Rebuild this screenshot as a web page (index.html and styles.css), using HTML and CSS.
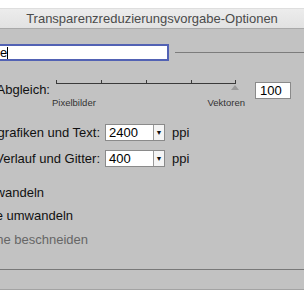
FILE: index.html
```
<!DOCTYPE html>
<html lang="de">
<head>
<meta charset="utf-8">
<title>Transparenzreduzierungsvorgabe-Optionen</title>
<link rel="stylesheet" href="styles.css">
</head>
<body>
<div class="dialog">
  <div class="titlebar">Transparenzreduzierungsvorgabe-Optionen</div>
  <div class="content">
    <div class="name-row">
      <div class="field"><span class="val">e</span><span class="caret"></span></div>
      <div class="rule"></div>
    </div>
    <div class="slider-row">
      <div class="lbl lbl-abgleich"><span>Raster-/Vektor-Abgleich:</span></div>
      <div class="slider">
        <div class="track">
          <div class="seg"></div><div class="seg"></div><div class="seg"></div><div class="seg last"></div>
        </div>
        <div class="thumb-row"><div class="thumb"></div></div>
        <div class="ends"><span>Pixelbilder</span><span>Vektoren</span></div>
      </div>
      <div class="numbox">100</div>
    </div>
    <div class="res-row first">
      <div class="lbl lbl-res"><span>Auflösung für Strichgrafiken und Text:</span></div>
      <div class="select"><span class="sel-val">2400</span><span class="sel-btn">&#9660;</span></div>
      <span class="unit">ppi</span>
    </div>
    <div class="res-row second">
      <div class="lbl lbl-res"><span>Auflösung für Verlauf und Gitter:</span></div>
      <div class="select"><span class="sel-val">400</span><span class="sel-btn">&#9660;</span></div>
      <span class="unit">ppi</span>
    </div>
    <div class="check c1"><span>Gesamten Text in Pfade umwandeln</span></div>
    <div class="check c2"><span>Alle Konturen in Pfade umwandeln</span></div>
    <div class="check c3 disabled"><span>Komplexe Bereiche beschneiden</span></div>
  </div>
  <div class="footer"></div>
</div>
</body>
</html>
```
FILE: styles.css
```
html, body {
  margin: 0;
  padding: 0;
  background: #ffffff;
}
body {
  font-family: "Liberation Sans", Arial, Helvetica, sans-serif;
  font-size: 13px;
  color: #111;
}
.dialog {
  width: 304px;
  height: 304px;
  overflow: hidden;
  padding-top: 8px;
  box-sizing: border-box;
}
.titlebar {
  height: 21px;
  line-height: 20px;
  box-sizing: border-box;
  border-top: 1px solid #dedede;
  border-bottom: 1px solid #a9a9a9;
  background: linear-gradient(#ececec, #e2e2e2);
  text-align: center;
  color: #4b4b4b;
  font-size: 13px;
  white-space: nowrap;
}
.content {
  height: 241px;
  box-sizing: border-box;
  background: #c2c2c2;
  border-bottom: 1px solid #787878;
  padding-top: 15px;
  display: flex;
  flex-direction: column;
}
.name-row {
  display: flex;
  align-items: center;
  height: 17px;
}
.field {
  width: 169px;
  height: 17px;
  box-sizing: border-box;
  background: #fff;
  border: 2px solid #5262b4;
  border-left: none;
  display: flex;
  align-items: center;
  font-size: 13px;
  line-height: 13px;
  color: #000;
}
.caret {
  width: 1px;
  height: 12px;
  background: #000;
}
.rule {
  flex: 1;
  height: 1px;
  margin-left: 6px;
  background: #7c7c7c;
}
.lbl {
  display: flex;
  justify-content: flex-end;
  white-space: nowrap;
  flex-shrink: 0;
}
.slider-row {
  display: flex;
  align-items: flex-start;
  margin-top: 19px;
}
.lbl-abgleich {
  width: 50px;
  margin-top: 2px;
  line-height: 16px;
}
.slider {
  width: 180px;
  margin-left: 6px;
  display: flex;
  flex-direction: column;
}
.track {
  display: flex;
}
.seg {
  width: 45px;
  height: 4px;
  box-sizing: border-box;
  border-left: 1px solid #3a3a3a;
  border-bottom: 1px solid #3a3a3a;
}
.seg.last {
  border-right: 1px solid #3a3a3a;
}
.thumb-row {
  margin-top: 1px;
  height: 5px;
  display: flex;
}
.thumb {
  margin-left: 175px;
  width: 0;
  height: 0;
  border-left: 4px solid transparent;
  border-right: 4px solid transparent;
  border-bottom: 5px solid #9a9a9a;
}
.ends {
  margin-top: 7px;
  margin-left: -4px;
  width: 193px;
  display: flex;
  justify-content: space-between;
  font-size: 9.5px;
  line-height: 11px;
  color: #333;
}
.numbox {
  margin-left: 19px;
  margin-top: 2px;
  width: 36px;
  height: 17px;
  box-sizing: border-box;
  border: 1px solid #8a8a8a;
  background: #fff;
  padding-left: 4px;
  line-height: 15px;
  color: #000;
}
.res-row {
  display: flex;
  align-items: center;
  height: 17px;
}
.res-row.first { margin-top: 16px; }
.res-row.second { margin-top: 9px; }
.lbl-res {
  width: 100px;
}
.select {
  margin-left: 5px;
  width: 60px;
  height: 17px;
  box-sizing: border-box;
  border: 1px solid #8a8a8a;
  background: #fff;
  display: flex;
}
.sel-val {
  flex: 1;
  padding-left: 3px;
  line-height: 15px;
  color: #000;
  border-right: 1px solid #9a9a9a;
}
.sel-btn {
  width: 10px;
  background: #f4f4f4;
  font-size: 7px;
  line-height: 15px;
  text-align: center;
  color: #111;
}
.unit {
  margin-left: 7px;
}
.check {
  display: flex;
  justify-content: flex-end;
  white-space: nowrap;
  line-height: 16px;
}
.c1 { width: 44px; margin-top: 18px; }
.c2 { width: 73px; margin-top: 7px; }
.c3 { width: 88px; margin-top: 8px; }
.disabled { color: #666; }
.footer {
  height: 20px;
  box-sizing: border-box;
  background: #c2c2c2;
  border-bottom: 1px solid #a3a3a3;
}
```
